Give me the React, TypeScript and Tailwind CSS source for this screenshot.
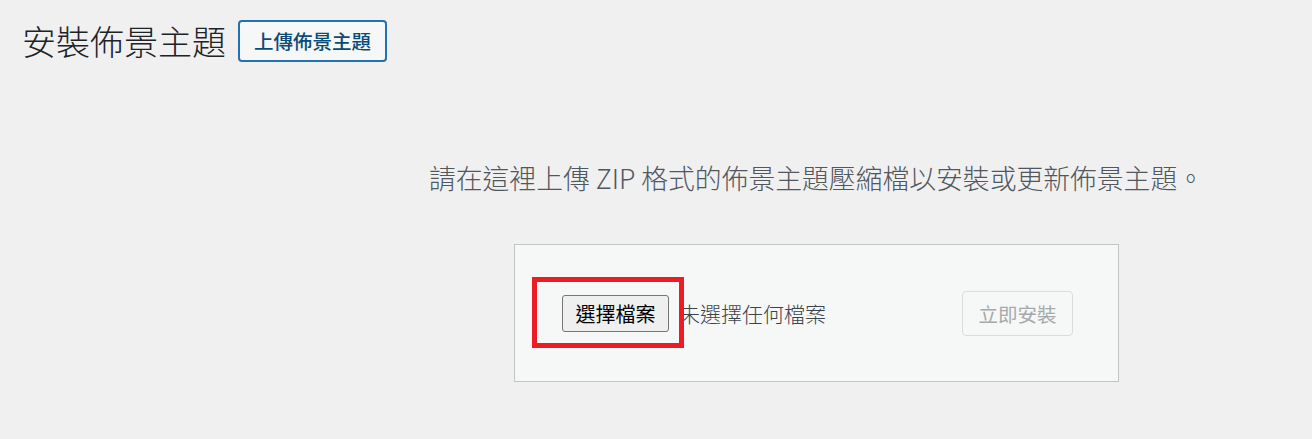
import React from "react";

const font = { fontFamily: '"Noto Sans CJK TC", "Noto Sans", sans-serif' };

export default function App() {
  return (
    <div className="w-full h-[439px] overflow-hidden bg-[#f0f0f1]" style={font}>
      <div className="flex items-center gap-[12px] pl-[22px] pt-[20px]">
        <h1 className="text-[34px] leading-[42px] font-light text-[#1d2327]">安裝佈景主題</h1>
        <button className="h-[42px] px-[14px] rounded-[4px] border-2 border-[#2271b1] bg-[#f6f7f7] text-[#0a4b78] text-[19.5px] leading-[38px] font-medium">
          上傳佈景主題
        </button>
      </div>
      <div className="w-[1633px] flex flex-col items-center pt-[96px]">
        <p className="text-[26.8px] leading-[40px] font-light text-[#50575e]">請在這裡上傳 ZIP 格式的佈景主題壓縮檔以安裝或更新佈景主題。</p>
        <div className="relative mt-[46px] w-[605px] h-[138px] border border-[#c3c4c7] bg-[#f6f7f7] flex items-center justify-between pl-[47px] pr-[45px]">
          <div className="flex items-center gap-[10px]">
            <button className="h-[37px] w-[107px] rounded-[3px] border border-[#767676] bg-[#efefef] text-[20px] leading-[35px] text-black">
              選擇檔案
            </button>
            <span className="text-[21px] leading-[30px] font-light text-[#3c434a]">未選擇任何檔案</span>
          </div>
          <button className="h-[45px] w-[111px] rounded-[4px] border border-[#dcdcde] bg-[#f6f7f7] text-[19.5px] leading-[43px] text-[#a7aaad]">
            立即安裝
          </button>
          <div className="absolute left-[17px] top-[32px] w-[152px] h-[71px] border-[5px] border-[#ed1c24]" />
        </div>
      </div>
    </div>
  );
}
